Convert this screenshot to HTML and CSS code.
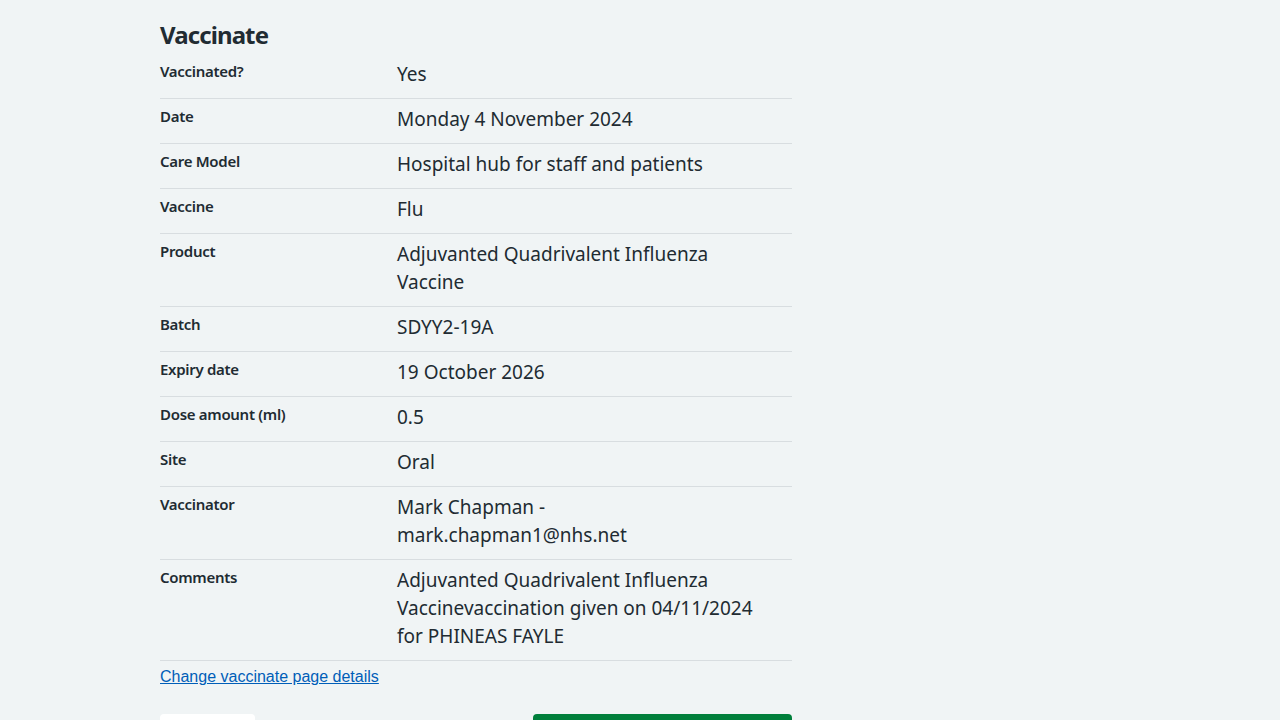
FILE: index.html
```html
<!DOCTYPE html>
<html lang="en">
<head>
<meta charset="utf-8">
<title>Vaccinate</title>
<link rel="stylesheet" href="styles.css">
</head>
<body>
<main class="page">
  <h2 class="heading">Vaccinate</h2>
  <dl class="summary">
    <div class="row"><dt class="key">Vaccinated?</dt><dd class="value">Yes</dd></div>
    <div class="row"><dt class="key">Date</dt><dd class="value">Monday 4 November 2024</dd></div>
    <div class="row"><dt class="key">Care Model</dt><dd class="value">Hospital hub for staff and patients</dd></div>
    <div class="row"><dt class="key">Vaccine</dt><dd class="value">Flu</dd></div>
    <div class="row"><dt class="key">Product</dt><dd class="value">Adjuvanted Quadrivalent Influenza Vaccine</dd></div>
    <div class="row"><dt class="key">Batch</dt><dd class="value">SDYY2-19A</dd></div>
    <div class="row"><dt class="key">Expiry date</dt><dd class="value">19 October 2026</dd></div>
    <div class="row"><dt class="key">Dose amount (ml)</dt><dd class="value">0.5</dd></div>
    <div class="row"><dt class="key">Site</dt><dd class="value">Oral</dd></div>
    <div class="row"><dt class="key">Vaccinator</dt><dd class="value">Mark Chapman - mark.chapman1@nhs.net</dd></div>
    <div class="row"><dt class="key">Comments</dt><dd class="value">Adjuvanted Quadrivalent Influenza Vaccinevaccination given on 04/11/2024 for PHINEAS FAYLE</dd></div>
  </dl>
  <a class="change-link" href="#">Change vaccinate page details</a>
  <div class="actions">
    <button class="btn btn-secondary" type="button" aria-label="Back"></button>
    <button class="btn btn-primary" type="button" aria-label="Confirm and save"></button>
  </div>
</main>
</body>
</html>
```
FILE: styles.css
```css
html, body {
  margin: 0;
  padding: 0;
  background: #f0f4f5;
  color: #212b32;
  font-family: "Noto Sans", "Open Sans", sans-serif;
}

.page {
  width: 632px;
  margin-left: 160px;
  padding-top: 19px;
}

.heading {
  margin: 0 0 3px 0;
  font-size: 24px;
  line-height: 32px;
  font-weight: 700;
  letter-spacing: -0.9px;
}

.summary {
  margin: 0;
}

.row {
  display: grid;
  grid-template-columns: 237px 1fr;
  border-bottom: 1px solid #d8dde0;
}

.key {
  margin: 0;
  padding: 7px 16px 8px 0;
  font-size: 15px;
  line-height: 20px;
  font-weight: 600;
  letter-spacing: -0.3px;
}

.value {
  margin: 0;
  padding: 6px 24px 10px 0;
  font-size: 19px;
  line-height: 28px;
  font-weight: 400;
}

.change-link {
  display: inline-block;
  margin-top: 5px;
  font-family: "Liberation Sans", Arial, sans-serif;
  font-size: 16px;
  line-height: 22px;
  color: #005eb8;
  text-decoration: underline;
}

.actions {
  display: flex;
  justify-content: space-between;
  margin-top: 26px;
}

.btn {
  border: 0;
  border-radius: 4px;
  height: 48px;
  padding: 0;
  cursor: pointer;
}

.btn-secondary {
  width: 95px;
  background: #ffffff;
  box-shadow: 0 4px 0 #d8dde0;
}

.btn-primary {
  width: 259px;
  background: #007f3b;
  box-shadow: 0 4px 0 #00401e;
}
```
